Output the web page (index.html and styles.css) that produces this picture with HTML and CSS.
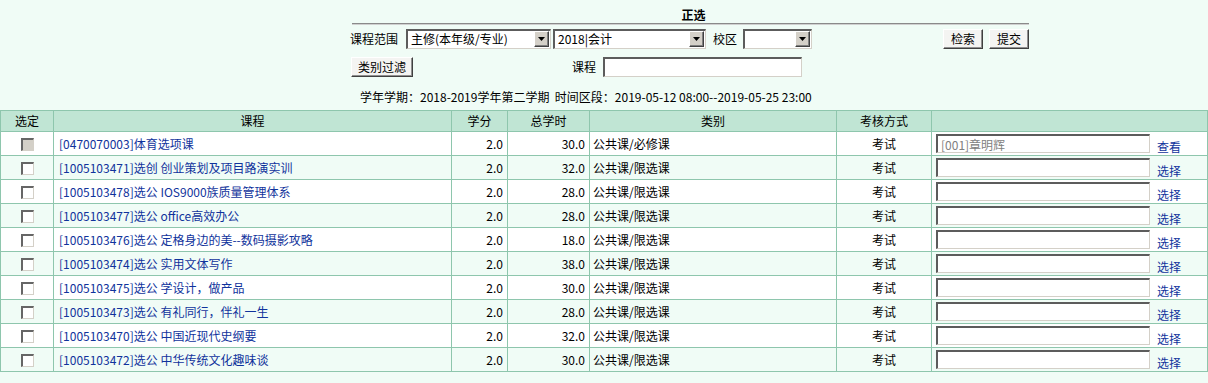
FILE: index.html
```html
<!DOCTYPE html>
<html>
<head>
    <meta charset="utf-8">
    <title>正选</title>
    <link rel="stylesheet" href="styles.css">
</head>
<body>
    <div class="query">
        <div class="query-title">正选</div>
        <div class="query-rule"></div>
        <div class="query-row">
            <span>课程范围</span>
            <div class="combo combo-range"><span class="combo-value">主修(本年级/专业)</span><span class="combo-arrow"><svg width="7" height="4" viewBox="0 0 7 4"><path d="M0 0H7L3.5 4Z" fill="#000"/></svg></span></div>
            <div class="combo combo-major"><span class="combo-value">2018|会计</span><span class="combo-arrow"><svg width="7" height="4" viewBox="0 0 7 4"><path d="M0 0H7L3.5 4Z" fill="#000"/></svg></span></div>
            <span class="label-campus">校区</span>
            <div class="combo combo-campus"><span class="combo-value"></span><span class="combo-arrow"><svg width="7" height="4" viewBox="0 0 7 4"><path d="M0 0H7L3.5 4Z" fill="#000"/></svg></span></div>
            <button class="btn btn-search">检索</button>
            <button class="btn btn-submit">提交</button>
        </div>
        <div class="query-row query-row2">
            <button class="btn btn-filter">类别过滤</button>
            <span class="label-course">课程</span>
            <input class="field field-course" type="text">
        </div>
        <div class="query-info">学年学期：2018-2019学年第二学期&nbsp;&nbsp;时间区段：2019-05-12 08:00--2019-05-25 23:00</div>
    </div>

    <table class="courses">
        <colgroup>
            <col style="width: 53px">
            <col style="width: 398px">
            <col style="width: 56px">
            <col style="width: 82px">
            <col style="width: 247px">
            <col style="width: 95px">
            <col>
        </colgroup>
        <thead>
            <tr>
                <th>选定</th>
                <th>课程</th>
                <th>学分</th>
                <th>总学时</th>
                <th>类别</th>
                <th>考核方式</th>
                <th></th>
            </tr>
        </thead>
        <tbody>
            <tr>
                <td class="c-check"><span class="check check-disabled"></span></td>
                <td class="c-course"><a href="#">[0470070003]体育选项课</a></td>
                <td class="c-num">2.0</td>
                <td class="c-num">30.0</td>
                <td class="c-type">公共课/必修课</td>
                <td class="c-exam">考试</td>
                <td class="c-teacher"><div class="pick"><input class="field field-teacher field-readonly" type="text" value="[001]章明辉" readonly><a href="#">查看</a></div></td>
            </tr>
            <tr>
                <td class="c-check"><span class="check"></span></td>
                <td class="c-course"><a href="#">[1005103471]选创 创业策划及项目路演实训</a></td>
                <td class="c-num">2.0</td>
                <td class="c-num">32.0</td>
                <td class="c-type">公共课/限选课</td>
                <td class="c-exam">考试</td>
                <td class="c-teacher"><div class="pick"><input class="field field-teacher" type="text"><a href="#">选择</a></div></td>
            </tr>
            <tr>
                <td class="c-check"><span class="check"></span></td>
                <td class="c-course"><a href="#">[1005103478]选公 IOS9000族质量管理体系</a></td>
                <td class="c-num">2.0</td>
                <td class="c-num">28.0</td>
                <td class="c-type">公共课/限选课</td>
                <td class="c-exam">考试</td>
                <td class="c-teacher"><div class="pick"><input class="field field-teacher" type="text"><a href="#">选择</a></div></td>
            </tr>
            <tr>
                <td class="c-check"><span class="check"></span></td>
                <td class="c-course"><a href="#">[1005103477]选公 office高效办公</a></td>
                <td class="c-num">2.0</td>
                <td class="c-num">28.0</td>
                <td class="c-type">公共课/限选课</td>
                <td class="c-exam">考试</td>
                <td class="c-teacher"><div class="pick"><input class="field field-teacher" type="text"><a href="#">选择</a></div></td>
            </tr>
            <tr>
                <td class="c-check"><span class="check"></span></td>
                <td class="c-course"><a href="#">[1005103476]选公 定格身边的美--数码摄影攻略</a></td>
                <td class="c-num">2.0</td>
                <td class="c-num">18.0</td>
                <td class="c-type">公共课/限选课</td>
                <td class="c-exam">考试</td>
                <td class="c-teacher"><div class="pick"><input class="field field-teacher" type="text"><a href="#">选择</a></div></td>
            </tr>
            <tr>
                <td class="c-check"><span class="check"></span></td>
                <td class="c-course"><a href="#">[1005103474]选公 实用文体写作</a></td>
                <td class="c-num">2.0</td>
                <td class="c-num">38.0</td>
                <td class="c-type">公共课/限选课</td>
                <td class="c-exam">考试</td>
                <td class="c-teacher"><div class="pick"><input class="field field-teacher" type="text"><a href="#">选择</a></div></td>
            </tr>
            <tr>
                <td class="c-check"><span class="check"></span></td>
                <td class="c-course"><a href="#">[1005103475]选公 学设计，做产品</a></td>
                <td class="c-num">2.0</td>
                <td class="c-num">30.0</td>
                <td class="c-type">公共课/限选课</td>
                <td class="c-exam">考试</td>
                <td class="c-teacher"><div class="pick"><input class="field field-teacher" type="text"><a href="#">选择</a></div></td>
            </tr>
            <tr>
                <td class="c-check"><span class="check"></span></td>
                <td class="c-course"><a href="#">[1005103473]选公 有礼同行，伴礼一生</a></td>
                <td class="c-num">2.0</td>
                <td class="c-num">28.0</td>
                <td class="c-type">公共课/限选课</td>
                <td class="c-exam">考试</td>
                <td class="c-teacher"><div class="pick"><input class="field field-teacher" type="text"><a href="#">选择</a></div></td>
            </tr>
            <tr>
                <td class="c-check"><span class="check"></span></td>
                <td class="c-course"><a href="#">[1005103470]选公 中国近现代史纲要</a></td>
                <td class="c-num">2.0</td>
                <td class="c-num">32.0</td>
                <td class="c-type">公共课/限选课</td>
                <td class="c-exam">考试</td>
                <td class="c-teacher"><div class="pick"><input class="field field-teacher" type="text"><a href="#">选择</a></div></td>
            </tr>
            <tr>
                <td class="c-check"><span class="check"></span></td>
                <td class="c-course"><a href="#">[1005103472]选公 中华传统文化趣味谈</a></td>
                <td class="c-num">2.0</td>
                <td class="c-num">30.0</td>
                <td class="c-type">公共课/限选课</td>
                <td class="c-exam">考试</td>
                <td class="c-teacher"><div class="pick"><input class="field field-teacher" type="text"><a href="#">选择</a></div></td>
            </tr>
        </tbody>
    </table>
</body>
</html>
```

FILE: styles.css
```css
body {
    margin: 0;
    background-color: #f0fcf6;
    color: #000;
    font-family: "Noto Sans CJK SC", sans-serif;
    font-size: 12px;
    line-height: 14px;
}

a {
    color: #10339c;
    text-decoration: none;
}

.query {
    width: 679px;
    margin-left: 350px;
}

.query-title {
    padding-top: 8px;
    padding-left: 8px;
    text-align: center;
    font-weight: bold;
}

.query-rule {
    margin: 1px 0 0 2px;
    border-top: 1px solid #8a8a8a;
    border-bottom: 1px solid #d0d0d0;
}

.query-row {
    display: flex;
    align-items: center;
    height: 20px;
    margin-top: 4px;
}

.query-row2 {
    margin-top: 8px;
}

.query-info {
    margin-top: 13px;
    padding-left: 10px;
}

/* old windows style select box */
.combo {
    display: flex;
    box-sizing: border-box;
    height: 20px;
    background-color: #fff;
    border-style: solid;
    border-width: 2px 1px 1px 2px;
    border-color: #5c5c5c #d4d0c8 #d4d0c8 #5c5c5c;
}

.combo-value {
    flex: 1;
    padding-left: 3px;
    line-height: 16px;
    white-space: nowrap;
    overflow: hidden;
}

.combo-arrow {
    display: flex;
    align-items: center;
    justify-content: center;
    box-sizing: border-box;
    width: 15px;
    height: 16px;
    margin: 0 1px 0 0;
    background-color: #d4d0c8;
    border-style: solid;
    border-width: 1px;
    border-color: #fff #404040 #404040 #fff;
    box-shadow: inset -1px -1px 0 #808080;
}

.combo-range {
    width: 145px;
    margin-left: 8px;
}

.combo-major {
    width: 153px;
    margin-left: 2px;
}

.label-campus {
    margin-left: 7px;
}

.combo-campus {
    width: 69px;
    margin-left: 6px;
}

.btn {
    box-sizing: border-box;
    height: 20px;
    padding: 0;
    background-color: #f4f4f2;
    border-style: solid;
    border-width: 1px;
    border-color: #fff #404040 #404040 #fff;
    box-shadow: inset -1px -1px 0 #909090;
    font-family: inherit;
    font-size: 12px;
    line-height: 16px;
    color: #000;
}

.btn-search {
    width: 40px;
    margin-left: auto;
}

.btn-submit {
    width: 40px;
    margin-left: 6px;
}

.btn-filter {
    width: 62px;
    margin-left: 1px;
}

.label-course {
    margin-left: 159px;
}

.field {
    box-sizing: border-box;
    height: 20px;
    padding: 0 3px;
    background-color: #fff;
    border-style: solid;
    border-width: 2px 1px 1px 2px;
    border-color: #5c5c5c #d4d0c8 #d4d0c8 #5c5c5c;
    font-family: inherit;
    font-size: 12px;
    outline: none;
}

.field-course {
    width: 199px;
    margin-left: 7px;
}

/* course table */
.courses {
    width: 100%;
    margin-top: 6px;
    border-collapse: collapse;
    table-layout: fixed;
}

.courses th,
.courses td {
    border: 1px solid #8ec6ad;
    padding: 0;
    white-space: nowrap;
    overflow: hidden;
}

.courses th {
    height: 20px;
    background-color: #c0e5d4;
    font-weight: normal;
    text-align: center;
}

.courses td {
    height: 23px;
    background-color: #fff;
}

.courses tbody tr:nth-child(even) td {
    background-color: #f0fcf6;
}

.c-check {
    text-align: center;
}

.check {
    display: inline-block;
    box-sizing: border-box;
    width: 13px;
    height: 13px;
    margin-left: 1px;
    vertical-align: middle;
    background-color: #fff;
    border-style: solid;
    border-width: 2px 1px 1px 2px;
    border-color: #666 #d4d0c8 #d4d0c8 #666;
}

.check-disabled {
    background-color: #d4d0c8;
}

.c-course {
    padding-left: 5px !important;
}

.c-num {
    text-align: right;
    padding-right: 4px !important;
}

.c-type {
    padding-left: 3px !important;
}

.c-exam {
    text-align: center;
}

.c-teacher {
    padding-left: 4px !important;
}

.pick {
    display: flex;
    align-items: flex-end;
}

.field-teacher {
    width: 214px;
    height: 19px;
}

.field-readonly {
    color: #808080;
}

.pick a {
    margin-left: 7px;
    margin-bottom: -1px;
}
```
